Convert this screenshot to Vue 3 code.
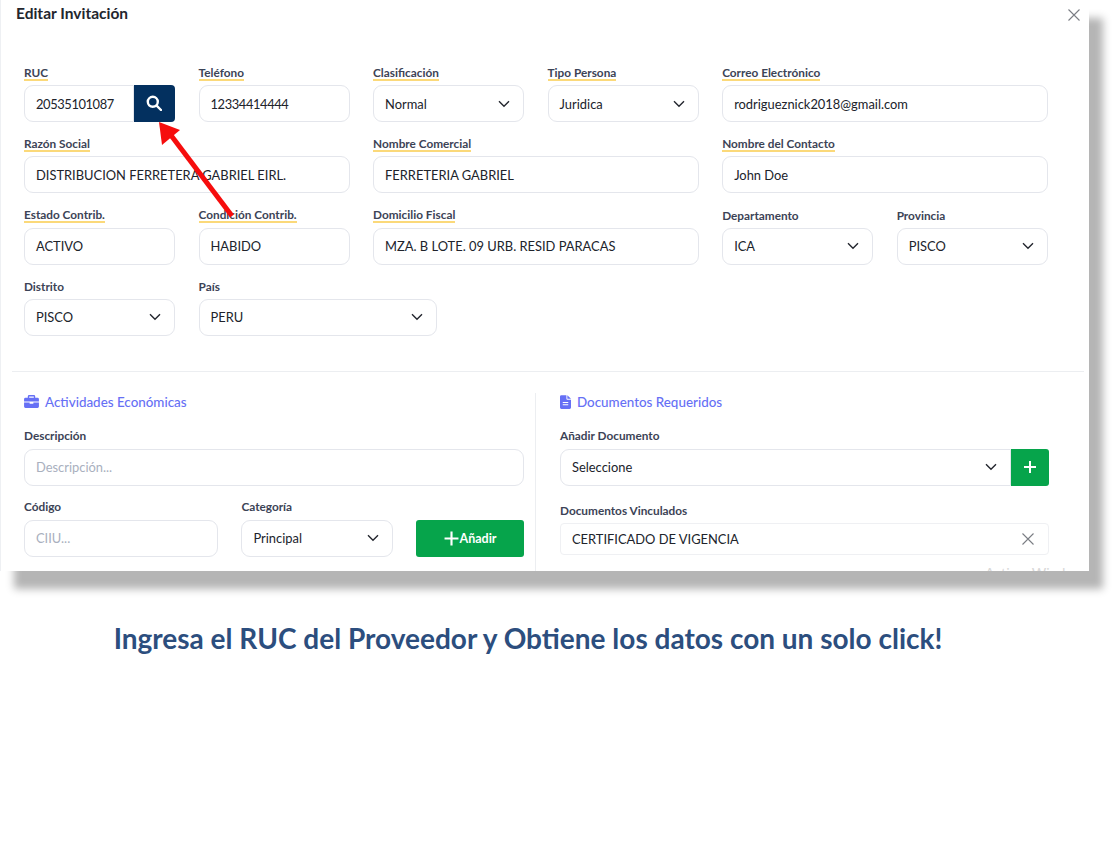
<script setup>
const fields = [
  { label: 'RUC', value: '20535101087', span: 2, mark: true, search: true, num: true },
  { label: 'Teléfono', value: '12334414444', span: 2, mark: true, num: true },
  { label: 'Clasificación', value: 'Normal', span: 2, mark: true, select: true },
  { label: 'Tipo Persona', value: 'Juridica', span: 2, mark: true, select: true },
  { label: 'Correo Electrónico', value: 'rodrigueznick2018@gmail.com', span: 4, mark: true },
  { label: 'Razón Social', value: 'DISTRIBUCION FERRETERA GABRIEL EIRL.', span: 4, mark: true },
  { label: 'Nombre Comercial', value: 'FERRETERIA GABRIEL', span: 4, mark: true },
  { label: 'Nombre del Contacto', value: 'John Doe', span: 4, mark: true },
  { label: 'Estado Contrib.', value: 'ACTIVO', span: 2, mark: true },
  { label: 'Condición Contrib.', value: 'HABIDO', span: 2, mark: true },
  { label: 'Domicilio Fiscal', value: 'MZA. B LOTE. 09 URB. RESID PARACAS', span: 4, mark: true },
  { label: 'Departamento', value: 'ICA', span: 2, select: true },
  { label: 'Provincia', value: 'PISCO', span: 2, select: true },
  { label: 'Distrito', value: 'PISCO', span: 2, select: true },
  { label: 'País', value: 'PERU', span: 3, select: true },
]
</script>

<template>
  <div class="page">
    <section class="panel">
      <header class="head">
        <h1>Editar Invitación</h1>
        <svg class="close" viewBox="0 0 12 12" width="12" height="12"><path d="M.5.5l11 11M11.500.5l-11 11" /></svg>
      </header>

      <div class="form">
        <div v-for="f in fields" :key="f.label" class="field" :style="{ gridColumn: 'span ' + f.span }">
          <label class="lbl"><span :class="{ mark: f.mark }">{{ f.label }}</span></label>
          <div class="control-row">
            <div class="input" :class="{ joined: f.search, num: f.num }">
              <span>{{ f.value }}</span>
              <svg v-if="f.select" class="chev" viewBox="0 0 12 8" width="12" height="8"><path d="M1 1.200l5 5 5-5" /></svg>
            </div>
            <button v-if="f.search" class="btn-search" type="button">
              <svg viewBox="0 0 16 16" width="16" height="16"><circle cx="6.800" cy="6.800" r="5" /><path d="M10.600 10.600l4.400 4.400" /></svg>
            </button>
          </div>
        </div>
      </div>

      <hr class="divider" />

      <div class="columns">
        <div class="col-left">
          <h2 class="sec">
            <svg viewBox="0 0 16 14" width="15" height="13"><path d="M5.500 0h5A1.500 1.500 0 0 1 12 1.500V3h2.500A1.500 1.500 0 0 1 16 4.500V7H0V4.500A1.500 1.500 0 0 1 1.500 3H4V1.500A1.500 1.500 0 0 1 5.500 0zM5.500 1.500V3h5V1.500zM0 8h6v1.500h4V8h6v4.500a1.500 1.500 0 0 1-1.500 1.500h-13A1.500 1.500 0 0 1 0 12.500z" /></svg>
            <span>Actividades Económicas</span>
          </h2>
          <label class="lbl">Descripción</label>
          <div class="input ph">Descripción...</div>
          <div class="activity-row">
            <div class="code">
              <label class="lbl">Código</label>
              <div class="input ph">CIIU...</div>
            </div>
            <div class="cat">
              <label class="lbl">Categoría</label>
              <div class="input">
                <span>Principal</span>
                <svg class="chev" viewBox="0 0 12 8" width="12" height="8"><path d="M1 1.200l5 5 5-5" /></svg>
              </div>
            </div>
            <button class="btn-add" type="button">
              <svg viewBox="0 0 14 14" width="15" height="15"><path d="M7 .5v13M.5 7h13" /></svg>
              <span>Añadir</span>
            </button>
          </div>
        </div>

        <div class="col-right">
          <h2 class="sec">
            <svg viewBox="0 0 12 15" width="11" height="14"><path d="M1.500 0H7v4a1 1 0 0 0 1 1h4v8.500a1.500 1.500 0 0 1-1.500 1.500h-9A1.500 1.500 0 0 1 0 13.500v-12A1.500 1.500 0 0 1 1.500 0zM8 0l4 4H8zM3 7.500v1h6v-1zm0 2.500v1h6v-1z" fill-rule="evenodd" /></svg>
            <span>Documentos Requeridos</span>
          </h2>
          <label class="lbl">Añadir Documento</label>
          <div class="control-row">
            <div class="input joined">
              <span>Seleccione</span>
              <svg class="chev" viewBox="0 0 12 8" width="12" height="8"><path d="M1 1.200l5 5 5-5" /></svg>
            </div>
            <button class="btn-plus" type="button">
              <svg viewBox="0 0 14 14" width="14" height="14"><path d="M7 1v12M1 7h12" /></svg>
            </button>
          </div>
          <label class="lbl second">Documentos Vinculados</label>
          <div class="tag">
            <span>CERTIFICADO DE VIGENCIA</span>
            <svg viewBox="0 0 12 12" width="12" height="12"><path d="M.5.5l11 11M11.500.5l-11 11" /></svg>
          </div>
        </div>
      </div>

      <div class="watermark">Activar Wind</div>

      <svg class="arrow" width="300" height="240" viewBox="0 0 300 240">
        <path d="M232 216L170 134" />
        <polygon points="159,122 162,145 180,130" />
      </svg>
    </section>

    <p class="caption">Ingresa el RUC del Proveedor y Obtiene los datos con un solo click!</p>
  </div>
</template>

<style>
html, body { background: #fff; }
</style>

<style scoped>
.page {
  width: 1112px;
  height: 860px;
  overflow: hidden;
  font-family: Lato, "Open Sans", sans-serif;
  color: #1f2430;
}
.panel {
  position: relative;
  width: 1088px;
  height: 571px;
  overflow: hidden;
  background: #fff;
  border-left: 1px solid #eef0f3;
  box-shadow: 14px 18px 8px #b5b5b5;
}
.head {
  display: flex;
  justify-content: space-between;
  height: 28px;
  padding: 0 9px 0 15px;
}
.head h1 {
  margin: 4px 0 0;
  font-size: 15.500px;
  line-height: 18px;
  font-weight: 700;
  color: #23262e;
}
.close { margin-top: 9px; }
.close path, .tag path {
  fill: none;
  stroke: #7a7d84;
  stroke-width: 1.100;
}
.form {
  display: grid;
  grid-template-columns: repeat(12, 64px);
  column-gap: 23.270px;
  row-gap: 11.330px;
  margin: 34px 0 0 23px;
}
.field { min-width: 0; }
.lbl {
  box-sizing: border-box;
  display: flex;
  align-items: center;
  height: 23px;
  padding-bottom: 1.500px;
  font-size: 11.800px;
  font-weight: 700;
  color: #3c4356;
}
.columns .lbl {
  height: 24px;
  padding-bottom: 2.500px;
}
.mark {
  line-height: 12px;
  box-shadow: 0 2px 0 #fbd97a;
}
.control-row { display: flex; }
.input {
  flex: 1;
  min-width: 0;
  box-sizing: border-box;
  display: flex;
  align-items: center;
  justify-content: space-between;
  height: 37px;
  padding: 0 13px 0 11px;
  background: #fff;
  border: 1px solid #e4e6ec;
  border-radius: 9px;
  font-size: 12.900px;
  color: #20232b;
  white-space: nowrap;
}
.input.num { letter-spacing: -0.4px; }
.input.joined { border-radius: 9px 0 0 9px; }
.input.ph { color: #a9b0be; }
.chev path {
  fill: none;
  stroke: #23262e;
  stroke-width: 1.400;
}
.btn-search {
  flex: none;
  width: 41px;
  height: 37px;
  padding: 0 2px 2px 0;
  border: 0;
  border-radius: 0 4px 4px 0;
  background: #03305f;
  display: flex;
  align-items: center;
  justify-content: center;
}
.btn-search circle, .btn-search path {
  fill: none;
  stroke: #fff;
  stroke-width: 2.400;
  stroke-linecap: round;
}
.divider {
  margin: 35px 5px 0 11px;
  border: 0;
  border-top: 1px solid #eceef1;
}
.columns {
  display: flex;
  margin-top: 21px;
}
.col-left {
  box-sizing: border-box;
  width: 535px;
  padding: 0 11px 0 23px;
  height: 178px;
  border-right: 1px solid #eceef1;
}
.col-right {
  width: 489px;
  margin-left: 24px;
}
.sec {
  display: flex;
  align-items: center;
  gap: 6px;
  height: 18px;
  margin: 0 0 14px;
  font-size: 13.400px;
  font-weight: 500;
  color: #6670f5;
}
.sec svg { fill: #6670f5; flex: none; }
.activity-row {
  display: flex;
  align-items: flex-end;
  margin-top: 10px;
}
.code { width: 195px; margin-right: 23px; }
.cat { width: 152px; margin-right: 23px; }
.btn-add {
  flex: none;
  width: 108px;
  height: 37px;
  padding: 0;
  border: 0;
  border-radius: 3px;
  background: #06a44b;
  color: #fff;
  font: 700 12.500px Lato, sans-serif;
  display: flex;
  align-items: center;
  justify-content: center;
  gap: 1px;
}
.btn-add path, .btn-plus path {
  fill: none;
  stroke: #fff;
  stroke-width: 2;
}
.btn-plus {
  flex: none;
  width: 38px;
  height: 37px;
  padding: 0;
  border: 0;
  border-radius: 0 3px 3px 0;
  background: #06a44b;
  display: flex;
  align-items: center;
  justify-content: center;
}
.columns .lbl.second {
  height: 23px;
  padding-bottom: 1.500px;
  margin-top: 14px;
}
.tag {
  box-sizing: border-box;
  display: flex;
  align-items: center;
  justify-content: space-between;
  height: 32px;
  padding: 0 14px 0 11px;
  border: 1px solid #eff0f3;
  border-radius: 4px;
  font-size: 12.900px;
  color: #20232b;
}
.watermark {
  position: absolute;
  left: 984px;
  top: 564px;
  font-size: 14px;
  color: #d8d8d8;
  white-space: nowrap;
}
.arrow {
  position: absolute;
  left: -1px;
  top: 0;
  pointer-events: none;
}
.arrow path {
  fill: none;
  stroke: #f60d0d;
  stroke-width: 5;
}
.arrow polygon { fill: #f60d0d; }
.caption {
  width: 1056px;
  margin: 50px 0 0;
  text-align: center;
  font-size: 28px;
  line-height: 34px;
  font-weight: 700;
  color: #2c4e7e;
}
</style>
